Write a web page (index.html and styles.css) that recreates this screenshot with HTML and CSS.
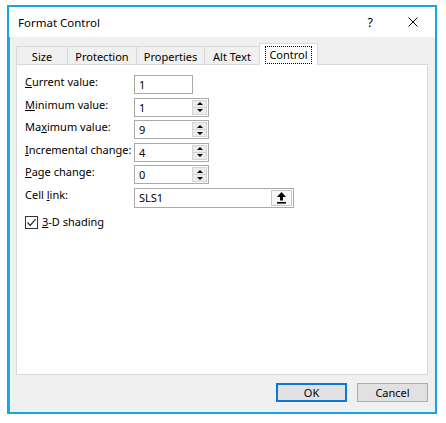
FILE: index.html
```html
<!DOCTYPE html>
<html>
<head>
<meta charset="utf-8">
<link rel="stylesheet" href="styles.css">
</head>
<body>
<div class="dialog">
  <div class="titlebar">
    <span class="title">Format Control</span>
    <span class="help">?</span>
    <svg class="close" width="10" height="10" viewBox="0 0 10 10"><path d="M0.5 0.5 L9.5 9.5 M9.5 0.5 L0.5 9.5" stroke="#000" stroke-width="1" fill="none"/></svg>
  </div>
  <div class="body">
    <div class="tabs">
      <div class="tab tab-size">Size</div>
      <div class="tab tab-protection">Protection</div>
      <div class="tab tab-properties">Properties</div>
      <div class="tab tab-alt">Alt Text</div>
      <div class="tab tab-control active"><span class="focus">Control</span></div>
    </div>
    <div class="panel">
      <div class="row">
        <div class="label"><u>C</u>urrent value:</div>
        <div class="field plain"><span class="value">1</span></div>
      </div>
      <div class="row">
        <div class="label"><u>M</u>inimum value:</div>
        <div class="field"><span class="value">1</span><span class="spin"><span class="up"></span><span class="down"></span></span></div>
      </div>
      <div class="row">
        <div class="label">Ma<u>x</u>imum value:</div>
        <div class="field"><span class="value">9</span><span class="spin"><span class="up"></span><span class="down"></span></span></div>
      </div>
      <div class="row">
        <div class="label"><u>I</u>ncremental change:</div>
        <div class="field"><span class="value">4</span><span class="spin"><span class="up"></span><span class="down"></span></span></div>
      </div>
      <div class="row">
        <div class="label"><u>P</u>age change:</div>
        <div class="field"><span class="value">0</span><span class="spin"><span class="up"></span><span class="down"></span></span></div>
      </div>
      <div class="row row-link">
        <div class="label">Cell <u>l</u>ink:</div>
        <div class="field link"><span class="value">SLS1</span>
          <span class="pick"><svg width="9" height="12" viewBox="0 0 9 12"><polygon points="4.5,0 9,5 6,5 6,8.5 3,8.5 3,5 0,5" fill="#000"/><rect x="0" y="10" width="9" height="1.6" fill="#000"/></svg></span>
        </div>
      </div>
      <div class="check-row">
        <span class="checkbox"><svg width="11" height="11" viewBox="0 0 11 11"><path d="M1.5 5.5 L4.2 8.3 L9.6 2.2" stroke="#222" stroke-width="1.2" fill="none"/></svg></span>
        <span class="check-label"><u>3</u>-D shading</span>
      </div>
    </div>
    <div class="buttons">
      <div class="btn default">OK</div>
      <div class="btn">Cancel</div>
    </div>
  </div>
</div>
</body>
</html>
```
FILE: styles.css
```css
* { box-sizing: border-box; }
body {
  margin: 0;
  padding: 5px 9px 9px 7px;
  background: #fff;
  font-family: "Segoe UI", "Noto Sans", sans-serif;
  font-size: 11px;
  color: #000;
}
.dialog {
  width: 430px;
  height: 409px;
  border: 2px solid #15a4e8;
  background: #f0f0f0;
  display: flex;
  flex-direction: column;
  box-shadow: inset 1px 0 0 #8a8a8a;
}
.titlebar {
  height: 30px;
  flex: none;
  background: #fff;
  display: flex;
  align-items: center;
  padding: 0 17px 0 9px;
}
.title { font-size: 11.5px; }
.help { margin-left: auto; margin-right: 35px; font-size: 12.5px; }
.close { display: block; }
.body {
  flex: 1;
  padding: 6px 7px 0 7px;
  display: flex;
  flex-direction: column;
}
.tabs {
  display: flex;
  align-items: flex-end;
  height: 21px;
  flex: none;
}
.tab {
  height: 18px;
  border: 1px solid #d9d9d9;
  border-bottom: none;
  margin-left: -1px;
  text-align: center;
  line-height: 16px;
  padding-top: 2px;
  background: #f0f0f0;
  white-space: nowrap;
}
.tab:first-child { margin-left: 0; }
.tab-size { width: 52px; }
.tab-protection { width: 70px; }
.tab-properties { width: 69px; }
.tab-alt { width: 56px; }
.tab-control { width: 59px; }
.tab.active {
  height: 22px;
  margin-bottom: -1px;
  background: #fff;
  position: relative;
  z-index: 1;
  padding-top: 3px;
}
.focus {
  display: inline-block;
  outline: 1px dotted #000;
  padding: 0 3px;
  line-height: 16px;
}
.panel {
  flex: none;
  height: 311px;
  background: #fff;
  border: 1px solid #d9d9d9;
  padding: 10px 0 0 8px;
}
.row {
  display: flex;
  align-items: flex-start;
  margin-bottom: 3.5px;
}
.label {
  width: 109px;
  line-height: 16px;
  margin-top: -1px;
  flex: none;
  white-space: nowrap;
}
.field {
  width: 75px;
  height: 19px;
  border: 1px solid #a9a9a9;
  display: flex;
  background: #fff;
}
.field.plain { width: 59px; }
.field.link { width: 160px; height: 20px; }
.value {
  flex: 1;
  padding-left: 4px;
  line-height: 17px;
}
.spin {
  width: 15px;
  margin: 1px 1px 1px 0;
  display: flex;
  flex-direction: column;
  border: 1px solid #d4d4d4;
  background: #ececec;
}
.up, .down {
  flex: 1;
  display: flex;
  align-items: center;
  justify-content: center;
}
.up { border-bottom: 1px solid #d4d4d4; }
.up::after {
  content: "";
  border-left: 3px solid transparent;
  border-right: 3px solid transparent;
  border-bottom: 3px solid #000;
}
.down::after {
  content: "";
  border-left: 3px solid transparent;
  border-right: 3px solid transparent;
  border-top: 3px solid #000;
}
.pick {
  width: 21px;
  margin: 1px 1px 1px 0;
  border: 1px solid #c8c8c8;
  background: #f8f8f8;
  display: flex;
  align-items: center;
  justify-content: center;
}
.check-row {
  display: flex;
  align-items: center;
  margin-top: 8px;
  height: 13px;
}
.checkbox {
  width: 13px;
  height: 13px;
  border: 1px solid #333;
  display: flex;
  align-items: center;
  justify-content: center;
  background: #fff;
}
.checkbox svg { display: block; }
.check-label { margin-left: 4px; line-height: 16px; }
.buttons {
  margin-top: 8px;
  display: flex;
  justify-content: flex-end;
  gap: 10px;
}
.btn {
  width: 71px;
  height: 19px;
  border: 1px solid #adadad;
  background: #e1e1e1;
  text-align: center;
  line-height: 17px;
}
.btn.default {
  border: 2px solid #0a78d4;
  line-height: 15px;
}
```
